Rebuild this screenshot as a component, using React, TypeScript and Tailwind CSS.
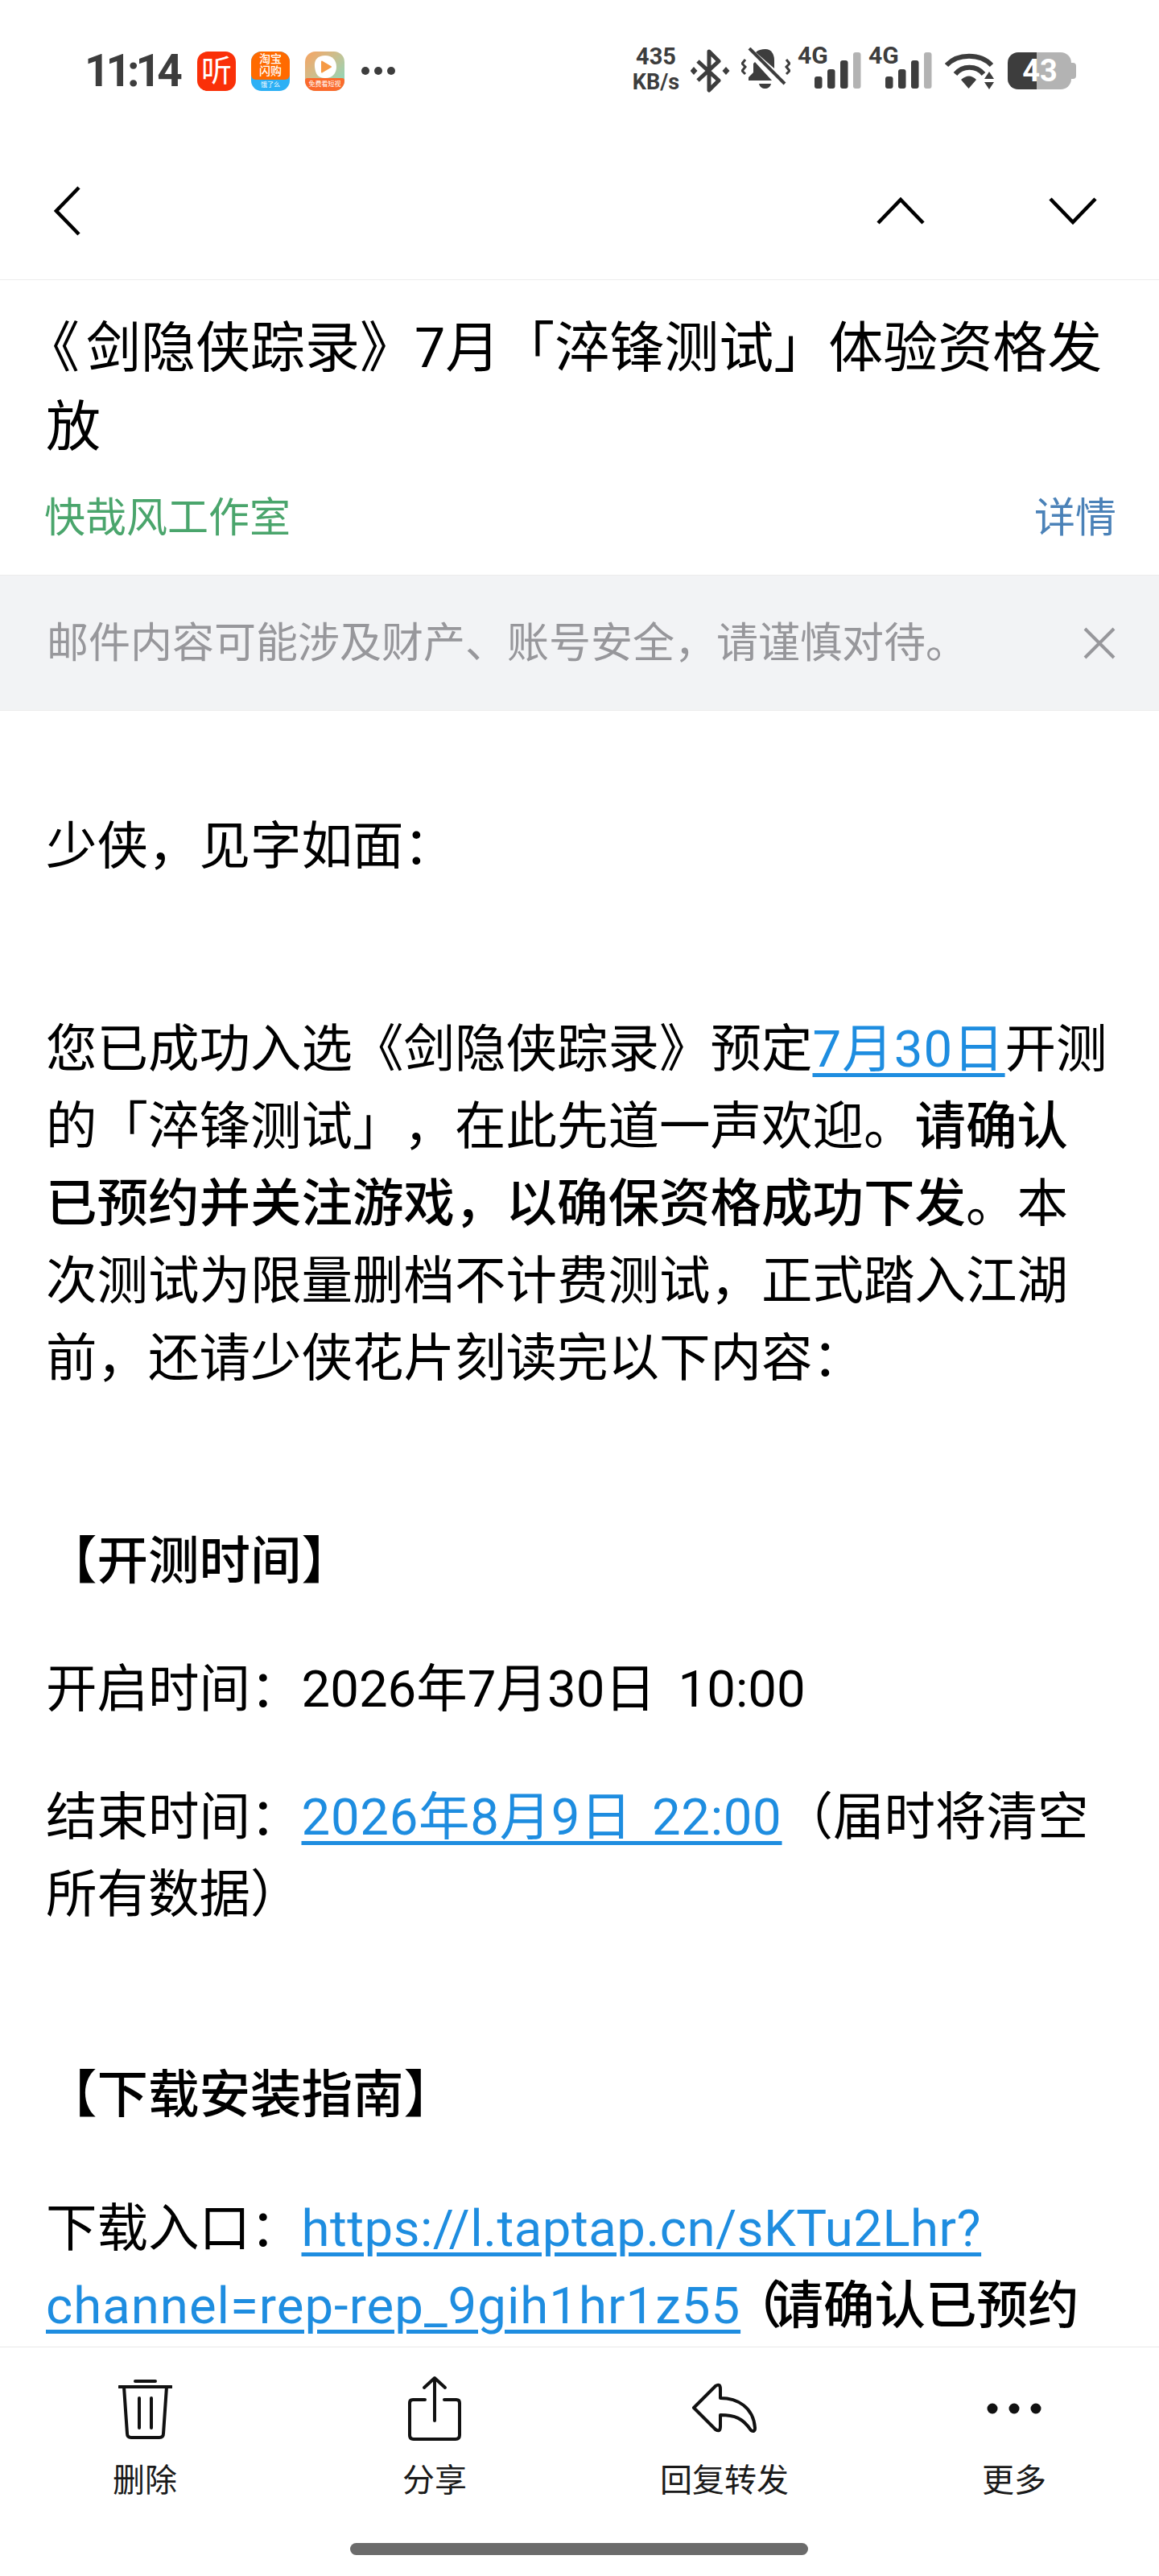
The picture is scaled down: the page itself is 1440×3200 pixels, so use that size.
import React from "react";

const Signal = () => (
  <div className="relative w-[79px] h-[52px] shrink-0 mb-[8px]">
    <span className="absolute left-0 top-[-4px] text-[30px] leading-[30px] font-bold text-[#3d3d3d]">4G</span>
    <svg className="absolute left-0 top-0" width="79" height="52" viewBox="0 0 79 52">
      <rect x="21" y="37" width="9.5" height="15" rx="3" fill="#3d3d3d" />
      <rect x="37" y="28" width="9.5" height="24" rx="3" fill="#3d3d3d" />
      <rect x="53" y="17" width="9.5" height="35" rx="3" fill="#3d3d3d" />
      <rect x="69" y="7" width="9.5" height="45" rx="3" fill="#b3b3b3" />
    </svg>
  </div>
);

function StatusBar() {
  return (
    <div className="h-[176px] flex items-center justify-between pl-[105px] pr-[103px]">
      <div className="flex items-center">
        <span className="text-[55px] leading-none font-bold text-[#3d3d3d] tracking-[-5px] w-[140px]">11:14</span>
        <div className="w-[48px] h-[49px] rounded-[13px] bg-[#fa3008] flex items-center justify-center text-white text-[38px] leading-none">听</div>
        <div className="ml-[19px] w-[48px] h-[49px] rounded-[13px] overflow-hidden flex flex-col bg-[#2cb0f5]">
          <div className="h-[35px] bg-[#ff6a00] rounded-b-[6px] flex flex-col items-center justify-center text-white text-[14px] leading-[15px] font-medium">
            <span>淘宝</span>
            <span>闪购</span>
          </div>
          <div className="flex-1 flex items-center justify-center text-white text-[8px] leading-none">饿了么</div>
        </div>
        <div className="ml-[19px] w-[49px] h-[49px] rounded-[13px] overflow-hidden flex flex-col items-center bg-gradient-to-br from-[#f8a25e] to-[#6fdcc4] relative">
          <svg className="mt-[4px]" width="30" height="30" viewBox="0 0 30 30">
            <path d="M15 1C24 1 29 7 29 15S24 29 15 29 3 24 2 15 6 1 15 1Z" fill="#fff" />
            <path d="M11 8.500 22 15 11 21.500Z" fill="#f59a45" stroke="#f59a45" strokeWidth="2" strokeLinejoin="round" />
          </svg>
          <div className="absolute left-0 right-0 bottom-0 h-[16px] bg-[#fb6a2c] rounded-t-[3px] flex items-center justify-center text-white text-[8px] leading-none whitespace-nowrap">免费看短视</div>
        </div>
        <div className="ml-[21px] flex gap-[6px]">
          <span className="w-[10px] h-[10px] rounded-full bg-[#3d3d3d]" />
          <span className="w-[10px] h-[10px] rounded-full bg-[#3d3d3d]" />
          <span className="w-[10px] h-[10px] rounded-full bg-[#3d3d3d]" />
        </div>
      </div>
      <div className="flex items-center">
        <div className="w-[60px] flex flex-col items-center font-bold text-[#3d3d3d] leading-none mb-[4px]">
          <span className="text-[29px] leading-[32px]">435</span>
          <span className="text-[27px] leading-[32px] whitespace-nowrap">KB/s</span>
        </div>
        <svg className="ml-[13px]" width="49" height="54" viewBox="0 0 49 54" fill="none">
          <path d="M9 15 35 39 23 51V3L35 15 9 39" stroke="#3d3d3d" strokeWidth="5" strokeLinejoin="round" />
          <path d="M4 22 8.500 27 4 32-.5 27Z M44 22 48.500 27 44 32 39.500 27Z" fill="#3d3d3d" />
        </svg>
        <svg className="ml-[14px] mb-[4px]" width="61" height="54" viewBox="0 0 61 54" fill="none">
          <path d="M30 2c7 0 11 6 11 14v10L18 6c3-3 7-4 12-4Z" fill="#3d3d3d" />
          <path d="M17 18 38 41H9v-4l6-6V20Z" fill="#3d3d3d" />
          <path d="M22 45h15c-1 4-4 6-7.500 6S23 49 22 45Z" fill="#3d3d3d" />
          <path d="M10 1 54 45" stroke="#3d3d3d" strokeWidth="4" />
          <path d="M5 15 1 20 5 24 1 29 5 33M56 15 60 20 56 24 60 29 56 33" stroke="#3d3d3d" strokeWidth="3" />
        </svg>
        <div className="ml-[9px]"><Signal /></div>
        <div className="ml-[9px]"><Signal /></div>
        <svg className="ml-[16px]" width="62" height="46" viewBox="0 0 62 46" fill="none">
          <path d="M2 16C16 1 44 1 58 16" stroke="#3d3d3d" strokeWidth="6" />
          <path d="M13 27C22 16 39 16 48 27" stroke="#3d3d3d" strokeWidth="6" />
          <path d="M18 34c7-6 13-6 19 0l-9.500 11Z" fill="#3d3d3d" transform="translate(2 0)" />
          <path d="M55 24 61 33H49ZM55 46 61 37H49Z" fill="#3d3d3d" />
        </svg>
        <div className="ml-[16px] relative w-[85px] h-[46px] flex">
          <div className="w-[36px] h-full bg-[#3d3d3d] rounded-l-[13px]" />
          <div className="w-[43px] h-full bg-[#b3b3b3] rounded-r-[13px]" />
          <div className="w-[6px] h-[20px] self-center bg-[#b3b3b3] rounded-r-[4px]" />
          <span className="absolute left-[17px] top-0 w-[46px] h-full flex items-center justify-center text-white text-[38px] font-bold leading-none">43</span>
        </div>
      </div>
    </div>
  );
}

function NavBar() {
  return (
    <div className="h-[172px] border-b border-[#ececec] relative flex items-center justify-between pl-[67px] pr-[77px]">
      <svg width="34" height="62" viewBox="0 0 34 62" fill="none">
        <path d="M31 2 3 31 31 60" stroke="#000" strokeWidth="4.500" />
      </svg>
      <div className="flex items-center gap-[154px]">
        <svg width="60" height="34" viewBox="0 0 60 34" fill="none">
          <path d="M2 32 30 3 58 32" stroke="#000" strokeWidth="4.500" />
        </svg>
        <svg width="60" height="34" viewBox="0 0 60 34" fill="none">
          <path d="M2 2 30 31 58 2" stroke="#000" strokeWidth="4.500" />
        </svg>
      </div>
    </div>
  );
}

function Subject() {
  return (
    <div className="pl-[57px] pr-[56px] pt-[36px] h-[366px]">
      <h1 className="text-[68px] leading-[98px] font-normal text-black">
        <span className="-ml-[26px] mr-[8px]">《</span>剑隐侠踪录》7月「淬锋测试」体验资格发放
      </h1>
      <div className="mt-[29px] -ml-[2px] -mr-[3px] flex items-center justify-between text-[51px] leading-[70px]">
        <span className="text-[#4aa56c]">快哉风工作室</span>
        <span className="text-[#4b82b8]">详情</span>
      </div>
    </div>
  );
}

function Banner() {
  return (
    <div className="h-[169px] bg-[#f2f3f5] border-y border-[#ececec] flex items-center justify-between pl-[58px] pr-[54px]">
      <span className="text-[52px] text-[#97979b] leading-none pt-[2px]">邮件内容可能涉及财产、账号安全，请谨慎对待。</span>
      <svg width="40" height="40" viewBox="0 0 40 40" fill="none">
        <path d="M2 2 38 38M38 2 2 38" stroke="#97979b" strokeWidth="4" />
      </svg>
    </div>
  );
}

const linkCls = "text-[#1e8de0] underline decoration-[5px] underline-offset-[8px]";

function Body() {
  return (
    <div className="flex-1 min-h-0 overflow-hidden px-[57px] pt-[121px] text-[63.5px] leading-[96px] text-black [text-spacing-trim:space-all]">
      <p>少侠，见字如面：</p>
      <div className="h-[156px]" />
      <p>
        您已成功入选《剑隐侠踪录》预定<a className={`${linkCls} tracking-[1px]`}>7月30日</a>开测的「淬锋测试」，在此先道一声欢迎。
        <span className="font-medium">请确认已预约并关注游戏，以确保资格成功下发</span>。本次测试为限量删档不计费测试，正式踏入江湖前，还请少侠花片刻读完以下内容：
      </p>
      <div className="h-[156px]" />
      <p className="font-medium">【开测时间】</p>
      <p className="mt-[63px] [word-spacing:12px]">开启时间：2026年7月30日 10:00</p>
      <p className="mt-[63px]">
        结束时间：<a className={`${linkCls} tracking-[0.7px] [word-spacing:8px]`}>2026年8月9日 22:00</a>（届时将清空所有数据）
      </p>
      <div className="h-[153px]" />
      <p className="font-medium">【下载安装指南】</p>
      <p className="mt-[70px]">
        下载入口：<a className={`${linkCls} tracking-[0.5px]`}>https://l.taptap.cn/sKTu2Lhr?<span className="tracking-[1px]">channel=rep-rep_9gih1hr1z55</span></a>
        <span className="font-medium"><span className="-ml-[12px] -mr-[12px]">（</span>请确认已预约并关注游戏）</span>
      </p>
    </div>
  );
}

const Action = ({ label, children }: { label: string; children: React.ReactNode }) => (
  <div className="flex flex-col items-center">
    <div className="h-[84px] mt-[34px] flex items-center justify-center">{children}</div>
    <span className="mt-[23px] text-[40px] leading-[50px] text-[#1a1a1a]">{label}</span>
  </div>
);

function BottomBar() {
  return (
    <div className="h-[285px] shrink-0 border-t border-[#e8e8e8] bg-white relative">
      <div className="grid grid-cols-4">
        <Action label="删除">
          <svg width="67" height="76" viewBox="0 0 67 76" fill="none" stroke="#111" strokeWidth="4" strokeLinecap="round" strokeLinejoin="round">
            <path d="M21 4H46" />
            <path d="M1 11H66" />
            <path d="M7 11 11 69Q11 74 16 74H51Q56 74 56 69L60 11" />
            <path d="M26 25V62M41 25V62" />
          </svg>
        </Action>
        <Action label="分享">
          <svg width="70" height="82" viewBox="0 0 70 82" fill="none" stroke="#111" strokeWidth="4" strokeLinecap="round" strokeLinejoin="round">
            <path d="M23 30H8Q4 30 4 34V74Q4 79 9 79H61Q66 79 66 74V34Q66 30 62 30H47" />
            <path d="M35 4V56" />
            <path d="M22 15 35 3 48 15" />
          </svg>
        </Action>
        <Action label="回复转发">
          <svg width="84" height="64" viewBox="0 0 84 64" fill="none" stroke="#111" strokeWidth="4" strokeLinejoin="round">
            <path d="M4 31 31 4Q37 0 37 8V19C58 19 78 30 80 56Q80 62 75 59C65 44 55 40 37 40V54Q37 62 31 58Z" />
          </svg>
        </Action>
        <Action label="更多">
          <svg width="68" height="14" viewBox="0 0 68 14" fill="#111">
            <circle cx="7" cy="7" r="6.500" />
            <circle cx="34" cy="7" r="6.500" />
            <circle cx="61" cy="7" r="6.500" />
          </svg>
        </Action>
      </div>
      <div className="absolute left-[435px] bottom-[26px] w-[569px] h-[15px] rounded-full bg-[#6b6b6b]" />
    </div>
  );
}

export default function App() {
  return (
    <div lang="zh-CN" className="w-[1440px] h-[3200px] bg-white flex flex-col overflow-hidden font-['Roboto','Noto_Sans_CJK_SC',sans-serif]">
      <StatusBar />
      <NavBar />
      <Subject />
      <Banner />
      <Body />
      <BottomBar />
    </div>
  );
}
